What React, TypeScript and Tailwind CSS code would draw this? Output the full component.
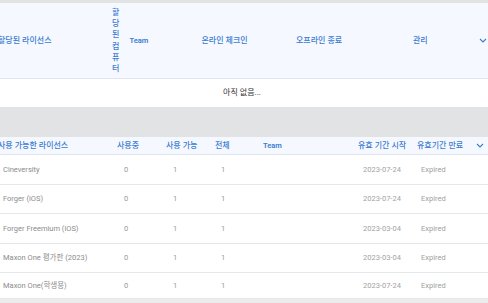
const Chevron = () => (
  <svg width="8" height="5" viewBox="0 0 8 5" fill="none">
    <polyline points="1,1 4,4 7,1" stroke="#3b7bd0" strokeWidth="1.1" />
  </svg>
);

const available = [
  { name: "Cineversity", inUse: 0, free: 1, total: 1, start: "2023-07-24", end: "Expired" },
  { name: "Forger (iOS)", inUse: 0, free: 1, total: 1, start: "2023-07-24", end: "Expired" },
  { name: "Forger Freemium (iOS)", inUse: 0, free: 1, total: 1, start: "2023-03-04", end: "Expired" },
  { name: "Maxon One 평가판 (2023)", inUse: 0, free: 1, total: 1, start: "2023-03-04", end: "Expired" },
  { name: "Maxon One(학생용)", inUse: 0, free: 1, total: 1, start: "2023-07-24", end: "Expired" },
];

const App = () => {
  return (
    <div className="w-[488px] h-[303px] overflow-hidden bg-white font-['Roboto','Noto_Sans_CJK_KR',sans-serif] text-[7.5px]">
      <div className="h-[3px] bg-[#e3e3e3]" />

      {/* Assigned licenses */}
      <div className="h-[76px] bg-[#f5f9ff] border-b border-[#e1e6ee] grid grid-cols-[112px_17.5px_72px_94.5px_117px_65px_10px] items-center text-[8px] text-[#3b7bd0] font-medium">
        <span className="-ml-[2px] whitespace-nowrap">할당된 라이선스</span>
        <span className="w-[8px] break-all leading-[1.4]">할당된 컴퓨터</span>
        <span className="text-[7.5px] font-semibold">Team</span>
        <span>온라인 체크인</span>
        <span>오프라인 종료</span>
        <span>관리</span>
        <span className="flex justify-center">
          <Chevron />
        </span>
      </div>
      <div className="h-[28px] flex items-center justify-center pr-[4px] text-[8px] text-[#333]">
        아직 없음...
      </div>

      <div className="h-[30px] bg-[#e2e3e5]" />

      {/* Available licenses */}
      <div className="h-[18px] bg-[#f5f9ff] border-b border-[#dfe5ee] grid grid-cols-[117px_49px_49px_48px_95px_59px_57px_14px] items-center text-[8px] text-[#3b7bd0] font-medium whitespace-nowrap">
        <span className="-ml-[2px]">사용 가능한 라이선스</span>
        <span>사용중</span>
        <span>사용 가능</span>
        <span>전체</span>
        <span className="text-[7.5px] font-semibold">Team</span>
        <span>유효 기간 시작</span>
        <span>유효기간 만료</span>
        <span className="flex pl-[2px]">
          <Chevron />
        </span>
      </div>
      {available.map((row, i) => (
        <div
          key={row.name}
          className={`grid grid-cols-[117px_49px_49px_48px_95px_59px_57px_14px] items-center border-b border-[#e6e7e9] text-[#8c8c8c] whitespace-nowrap ${
            i === available.length - 1 ? "h-[26px]" : "h-[29.5px]"
          }`}
        >
          <span className="pl-[3px]">{row.name}</span>
          <span className="pl-[7px] text-[#999]">{row.inUse}</span>
          <span className="pl-[7px] text-[#999]">{row.free}</span>
          <span className="pl-[6px] text-[#999]">{row.total}</span>
          <span />
          <span className="pl-[5px] text-[#a3a3a3]">{row.start}</span>
          <span className="pl-[4px] text-[#a0a0a0]">{row.end}</span>
          <span />
        </div>
      ))}
      <div className="h-[4px] bg-[#ececec]" />
    </div>
  );
};

export default App;
